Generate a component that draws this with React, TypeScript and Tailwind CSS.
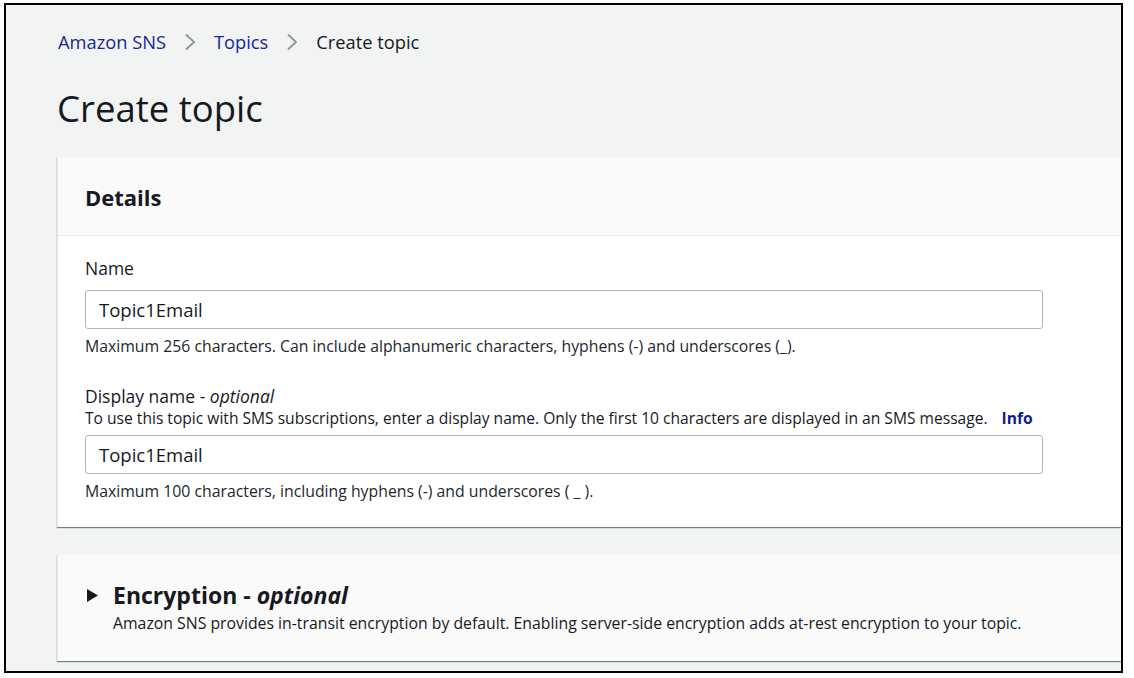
import React from "react";

const font = { fontFamily: '"Open Sans", "Noto Sans", sans-serif' };

function Chevron() {
  return (
    <svg width="12" height="18" viewBox="0 0 12 18" className="mx-[18px]">
      <path d="M2 1.5 L10 9 L2 16.5" fill="none" stroke="#8d9596" strokeWidth="1.8" />
    </svg>
  );
}

function Field({
  label,
  optional,
  description,
  value,
  hint,
}: {
  label: string;
  optional?: boolean;
  description?: boolean;
  value: string;
  hint: string;
}) {
  return (
    <div className="flex flex-col">
      <label className="text-[17.5px] leading-[22px] text-[#16191f]">
        {label}
        {optional && (
          <>
            {" - "}
            <i>optional</i>
          </>
        )}
      </label>
      {description && (
        <p className="whitespace-nowrap text-[15.6px] leading-[22px] text-[#16191f]">
          To use this topic with SMS subscriptions, enter a display name. Only the first 10 characters are displayed in
          an SMS message.
          <a className="ml-[14px] font-bold text-[#0f1b91]">Info</a>
        </p>
      )}
      <div
        className={`${description ? "mt-[6px]" : "mt-[11px]"} flex h-[39px] w-[958px] items-center rounded-[3px] border border-[#aab7b8] bg-white pl-[13px] text-[18.5px] text-[#16191f]`}
      >
        {value}
      </div>
      <p className="mt-[7px] text-[15.8px] leading-[20px] text-[#22272e]">{hint}</p>
    </div>
  );
}

export default function App() {
  return (
    <div className="h-[678px] w-[1134px] overflow-hidden bg-white pl-[4px] pt-[3px]" style={font}>
      <div className="h-[670px] w-[1119px] overflow-hidden border-2 border-black bg-[#f2f3f3] pl-[51px]">
        <nav className="mt-[25px] flex items-center text-[18.3px] leading-[24px]">
          <a className="ml-[1px] text-[#16269a]">Amazon SNS</a>
          <Chevron />
          <a className="text-[#16269a]">Topics</a>
          <Chevron />
          <span className="text-[#16191f]">Create topic</span>
        </nav>

        <h1 className="mt-[32px] text-[36.5px] leading-[44px] text-[#16191f]">Create topic</h1>

        <section className="mt-[27px] w-[1100px] border-l border-[#e3e6e6] bg-white shadow-[0_1px_1px_0_rgba(0,28,36,0.55)]">
          <div className="flex h-[79px] items-center border-b border-[#eaeded] bg-[#fafafa] pl-[27px] pt-[2px]">
            <h2 className="text-[22px] font-bold text-[#16191f]">Details</h2>
          </div>
          <div className="flex flex-col gap-[29px] pb-[26px] pl-[27px] pt-[21px]">
            <Field
              label="Name"
              value="Topic1Email"
              hint="Maximum 256 characters. Can include alphanumeric characters, hyphens (-) and underscores (_)."
            />
            <Field
              label="Display name"
              optional
              description
              value="Topic1Email"
              hint="Maximum 100 characters, including hyphens (-) and underscores ( _ )."
            />
          </div>
        </section>

        <section className="mt-[28px] w-[1100px] border-l border-[#e3e6e6] bg-[#fafafa] pb-[28px] pl-[29px] pt-[25px] shadow-[0_1px_1px_0_rgba(0,28,36,0.55)]">
          <div className="flex items-center">
            <svg width="11" height="13" viewBox="0 0 11 13" className="mr-[15px]">
              <path d="M0 0 L11 6.5 L0 13 Z" fill="#16191f" />
            </svg>
            <h2 className="text-[23px] font-bold leading-[30px] text-[#16191f]">
              Encryption - <i>optional</i>
            </h2>
          </div>
          <p className="ml-[26px] mt-[3px] whitespace-nowrap text-[15.8px] leading-[20px] text-[#16191f]">
            Amazon SNS provides in-transit encryption by default. Enabling server-side encryption adds at-rest encryption
            to your topic.
          </p>
        </section>
      </div>
    </div>
  );
}
